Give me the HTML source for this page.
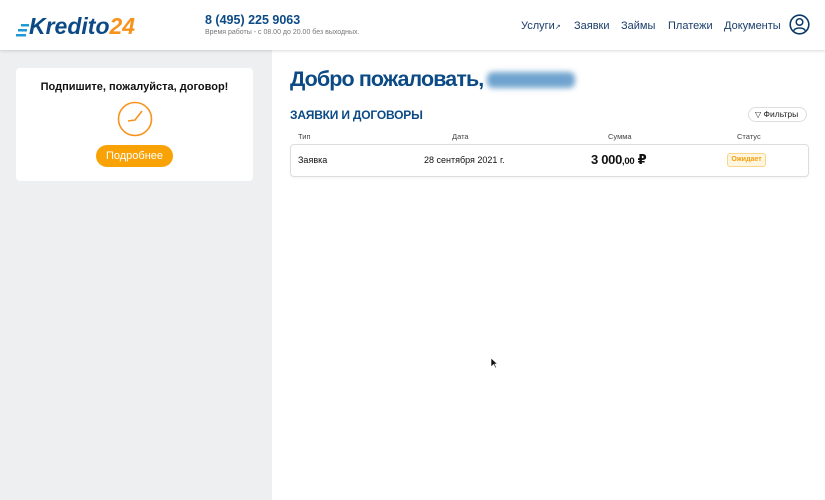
<!DOCTYPE html>
<html><head><meta charset="utf-8"><style>
*{margin:0;padding:0;box-sizing:border-box}
body{width:825px;height:500px;overflow:hidden;background:#fff;font-family:"Liberation Sans","DejaVu Sans",sans-serif;position:relative}
.hdr{position:absolute;left:0;top:0;width:825px;height:50px;background:#fff;box-shadow:0 1px 3px rgba(0,0,0,.15);z-index:2}
.side{position:absolute;left:0;top:50px;width:272px;height:450px;background:#eeeff1}
.card{position:absolute;left:16px;top:68px;width:237px;height:113px;background:#fff;border-radius:4px}
.abs{position:absolute;white-space:nowrap}
.nav{position:absolute;top:20px;font-size:11px;color:#1a3d6a}
</style></head><body>
<div class="hdr">
  <div class="abs" style="left:16px;top:14px;">
    <svg width="14" height="22" style="position:absolute;left:0;top:4px"><rect x="5" y="6" width="8" height="2.5" fill="#1e9ad6"/><rect x="2" y="11" width="9" height="2.5" fill="#1e9ad6"/><rect x="0" y="16" width="10" height="2.5" fill="#1e9ad6"/></svg>
    <span style="position:absolute;left:13px;top:-1px;font-size:23px;font-weight:bold;font-style:italic;color:#0b4a85;letter-spacing:0px">Kredito<span style="color:#f7931d">24</span></span>
  </div>
  <div class="abs" style="left:205px;top:13px;font-size:12.5px;font-weight:bold;color:#0b4a85">8 (495) 225 9063</div>
  <div class="abs" style="left:205px;top:29px;font-size:7px;color:#777">Время работы - с 08.00 до 20.00 без выходных.</div>
  <div class="nav" style="left:521px">Услуги<span style="font-size:7px">↗</span></div>
  <div class="nav" style="left:574px">Заявки</div>
  <div class="nav" style="left:621px">Займы</div>
  <div class="nav" style="left:668px">Платежи</div>
  <div class="nav" style="left:724px">Документы</div>
  <svg class="abs" style="left:789px;top:14px" width="21" height="21" viewBox="0 0 21 21"><circle cx="10.5" cy="10.5" r="9.3" fill="none" stroke="#0b3a6a" stroke-width="1.6"/><circle cx="10.5" cy="8" r="3.3" fill="none" stroke="#0b3a6a" stroke-width="1.5"/><path d="M4.5 17 C6 13,15 13,16.5 17" fill="none" stroke="#0b3a6a" stroke-width="1.5"/></svg>
</div>
<div class="side"></div>
<div class="card">
  <div class="abs" style="left:0;width:237px;text-align:center;top:13px;font-size:11px;font-weight:bold;color:#111">Подпишите, пожалуйста, договор!</div>
  <svg class="abs" style="left:101px;top:33px" width="36" height="36" viewBox="0 0 36 36"><circle cx="18" cy="18" r="16.5" fill="none" stroke="#f7931d" stroke-width="1.6"/><path d="M11 20 L18 19 L25 10" fill="none" stroke="#f7931d" stroke-width="1.6"/></svg>
  <div class="abs" style="left:80px;top:77px;width:77px;height:22px;border-radius:11px;background:#f9a205;color:#fff;font-size:11px;text-align:center;line-height:22px">Подробнее</div>
</div>
<div class="abs" style="left:290px;top:67px;font-size:21.5px;font-weight:bold;color:#0b4a85;letter-spacing:-0.9px">Добро пожаловать,</div>
<div class="abs" style="left:487px;top:72px;width:88px;height:16px;background:#6fa3cf;filter:blur(3px);border-radius:6px"></div>
<div class="abs" style="left:290px;top:108px;font-size:12px;font-weight:bold;color:#0b4a85;letter-spacing:-0.2px">ЗАЯВКИ И ДОГОВОРЫ</div>
<div class="abs" style="left:748px;top:107px;width:59px;height:15px;border:1px solid #ddd;border-radius:8px;font-size:8.5px;color:#222;line-height:13px;padding-left:6px"><span style="font-size:8px">▽</span> Фильтры</div>
<div class="abs" style="left:298px;top:132px;font-size:7.5px;color:#444">Тип</div>
<div class="abs" style="left:452px;top:132px;font-size:7.5px;color:#444">Дата</div>
<div class="abs" style="left:608px;top:132px;font-size:7.5px;color:#444">Сумма</div>
<div class="abs" style="left:737px;top:132px;font-size:7.5px;color:#444">Статус</div>
<div class="abs" style="left:290px;top:144px;width:519px;height:33px;border:1px solid #ddd;border-radius:4px;box-shadow:0 1px 2px rgba(0,0,0,.05)"></div>
<div class="abs" style="left:298px;top:155px;font-size:9px;color:#111">Заявка</div>
<div class="abs" style="left:424px;top:155px;font-size:9px;color:#111">28 сентября 2021 г.</div>
<div class="abs" style="left:591px;top:152px;font-size:13px;font-weight:bold;color:#111;letter-spacing:-0.3px">3 000<span style="font-size:9.5px">,00</span> ₽</div>
<div class="abs" style="left:727px;top:153px;width:39px;height:14px;border:1px solid #fbd48a;background:#fff6e0;border-radius:3px;font-size:7px;font-weight:bold;color:#f5a011;text-align:center;line-height:12px">Ожидает</div>
<svg class="abs" style="left:490px;top:357px" width="8" height="12"><path d="M1 1 L1 10 L3.5 7.5 L5.5 11 L6.5 10.5 L4.7 7 L7.5 7 Z" fill="#111" stroke="#fff" stroke-width=".6"/></svg>
</body></html>
